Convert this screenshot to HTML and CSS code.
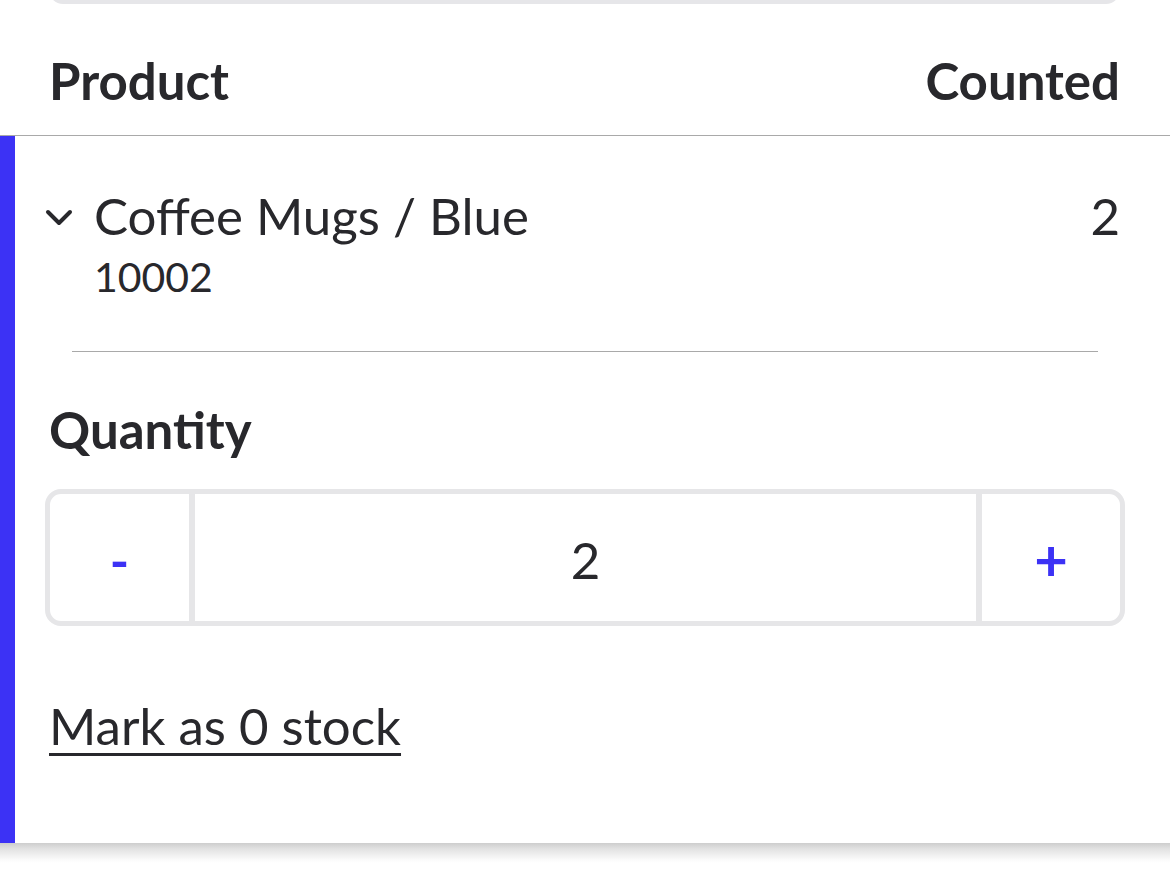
FILE: index.html
```html
<!DOCTYPE html>
<html lang="en">
<head>
    <meta charset="UTF-8">
    <meta name="viewport" content="width=device-width, initial-scale=1.0">
    <title>Stock count</title>
    <link rel="stylesheet" href="styles.css">
</head>
<body>
    <!-- search field, scrolled mostly out of view -->
    <div class="search-bar"></div>

    <div class="list-head">
        <span>Product</span>
        <span>Counted</span>
    </div>

    <!-- selected row -->
    <section class="count-item">
        <div class="product-row">
            <svg class="chevron" width="28" height="18" viewBox="0 0 28 18">
                <path d="M3 3 L14 14 L25 3" fill="none" stroke="#28282c" stroke-width="4" stroke-linecap="round" stroke-linejoin="round"/>
            </svg>
            <div class="product-text">
                <div class="product-name">Coffee Mugs / Blue</div>
                <div class="product-sku">10002</div>
            </div>
            <div class="product-count">2</div>
        </div>

        <hr class="divider">

        <h2 class="qty-label">Quantity</h2>
        <div class="stepper">
            <button class="step-btn minus">-</button>
            <div class="step-value">2</div>
            <button class="step-btn plus">+</button>
        </div>

        <a href="#" class="zero-link">Mark as 0 stock</a>
    </section>
    <div class="list-rest"></div>
</body>
</html>
```

FILE: styles.css
```css
* {
    margin: 0;
    padding: 0;
    box-sizing: border-box;
}

body {
    font-family: 'Lato', 'Noto Sans', sans-serif;
    color: #28282c;
    background: #ffffff;
}

.search-bar {
    height: 44px;
    margin: -40px 50px 0 49px;
    background: #e6e6e9;
    border-radius: 14px;
}

.list-head {
    display: flex;
    justify-content: space-between;
    padding: 46px 50px 24px 49px;
    font-size: 51px;
    line-height: 1.2;
    font-weight: bold;
    border-bottom: 1px solid #a9a9a9;
}

.count-item {
    border-left: 15px solid #3c32f5;
    padding: 49px 45px 87px 30px;
}

/* shadow under the open row */
.list-rest {
    height: 20px;
    background: linear-gradient(#cdcdcd, #e2e2e2 30%, #fbfbfb 85%, #ffffff);
}

.product-row {
    display: flex;
    align-items: flex-start;
}

.chevron {
    margin-top: 24px;
    margin-right: 21px;
    flex-shrink: 0;
}

.product-text {
    flex: 1;
}

.product-name {
    font-size: 51px;
    line-height: 1.2;
}

.product-sku {
    font-size: 41px;
    line-height: 1.2;
    margin-top: 6px;
}

.product-count {
    font-size: 51px;
    line-height: 1.2;
    margin-right: 5px;
}

.divider {
    border: none;
    border-top: 1px solid #a9a9a9;
    margin: 49px 27px 0 27px;
}

.qty-label {
    font-size: 51px;
    line-height: 1.2;
    font-weight: bold;
    margin: 47px 0 0 4px;
}

.stepper {
    display: flex;
    height: 137px;
    margin-top: 29px;
    border: 5px solid #e6e6e8;
    border-radius: 16px;
}

.step-btn {
    width: 139px;
    padding-top: 6px;
    border: none;
    background: none;
    font-family: inherit;
    font-size: 52px;
    font-weight: bold;
    color: #3c32f5;
    cursor: pointer;
}

.step-btn.plus {
    width: 144px;
    font-size: 58px;
    padding-top: 2px;
    border-left: 6px solid #e6e6e8;
}

.step-value {
    flex: 1;
    display: flex;
    align-items: center;
    justify-content: center;
    padding-top: 5px;
    border-left: 6px solid #e6e6e8;
    font-size: 51px;
}

.zero-link {
    display: inline-block;
    margin: 69px 0 0 4px;
    font-size: 51px;
    line-height: 1.2;
    color: #28282c;
    text-decoration: underline;
    text-decoration-thickness: 3px;
    text-underline-offset: 8px;
}
```
